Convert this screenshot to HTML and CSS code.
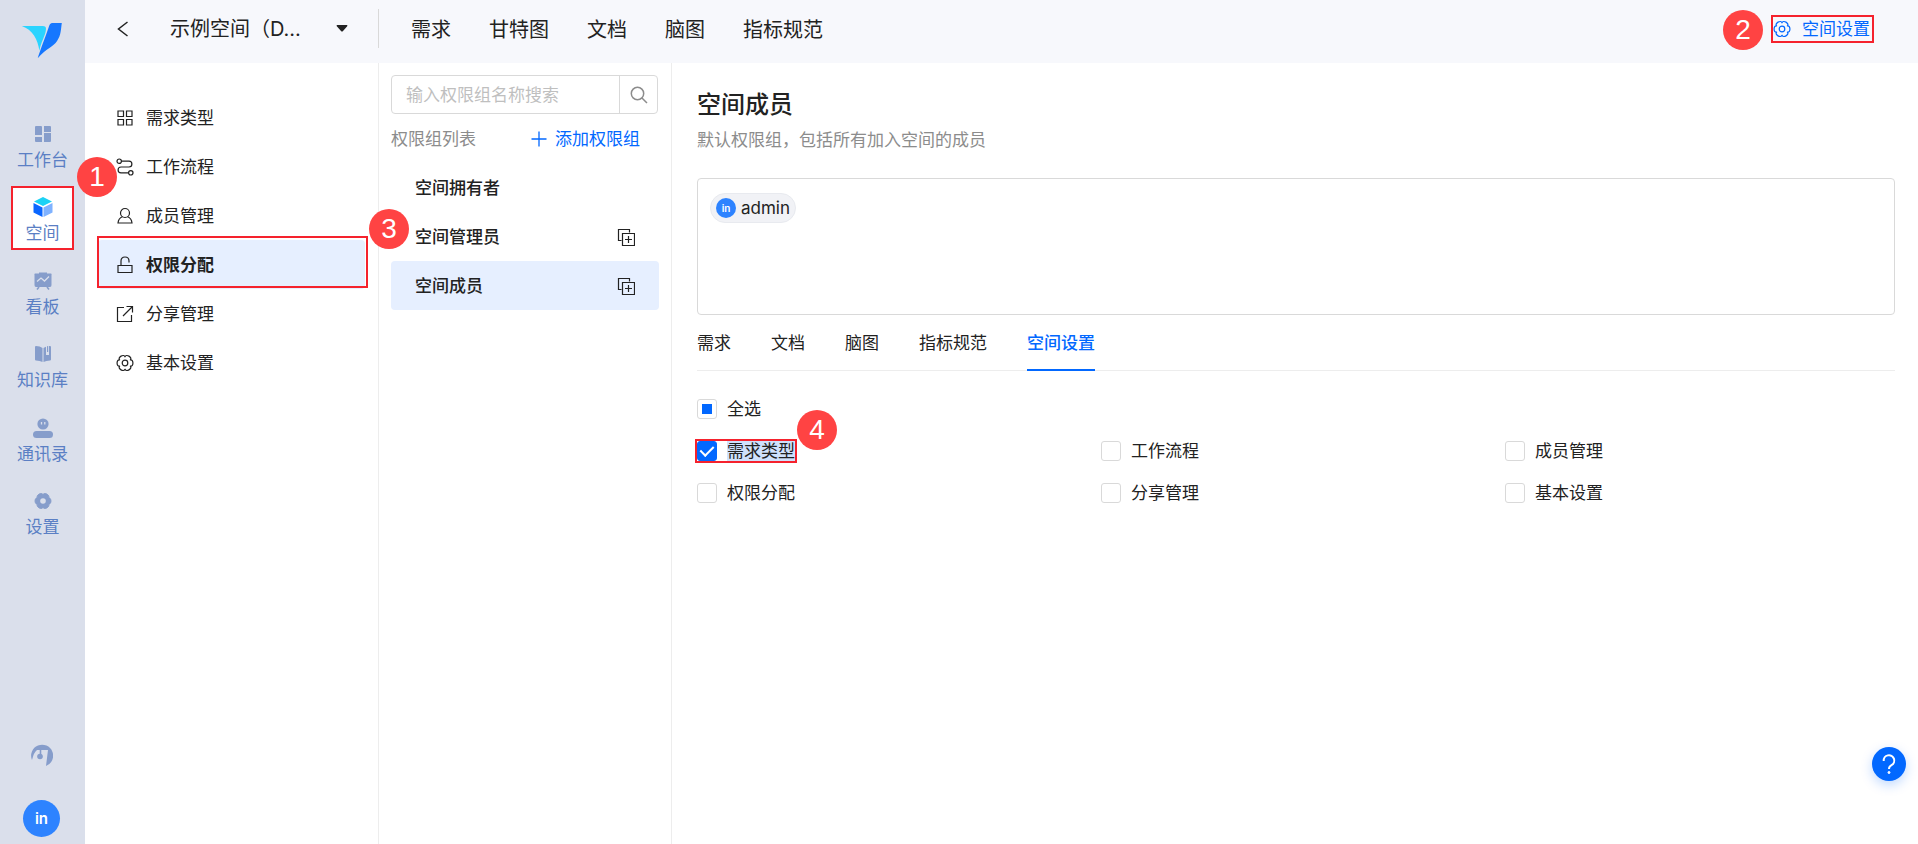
FILE: index.html
```html
<!DOCTYPE html>
<html lang="zh-CN">
<head>
<meta charset="utf-8">
<title>空间设置</title>
<link rel="stylesheet" href="styles.css">
</head>
<body>
<svg class="symbols" aria-hidden="true">
  <symbol id="gear" viewBox="0 0 18 18"><path stroke-linejoin="round" d="M14.37 5.9C17.77 5.1 17.77 12.9 14.37 12.1C16.77 14.64 10 18.55 9 15.2C8 18.55 1.23 14.64 3.63 12.1C.23 12.9 .23 5.1 3.63 5.9C1.23 3.36 8 -.55 9 2.8C10 -.55 16.77 3.36 14.37 5.9Z"/><circle cx="9" cy="9" r="2.800"/></symbol>
  <symbol id="copy" viewBox="0 0 18 18"><path d="M4.500 12.500H1.500V1.500H12.500V4.500M5.500 5.500H17.500V17.500H5.500ZM11.500 8V15M8 11.500H15"/></symbol>
</svg>
<div class="app">
  <aside class="rail">
    <svg class="logo" viewBox="60 60 126 115" aria-label="logo"><path fill="#2ad4ff" d="M62 75H125Q136 75 135 84C134 104 120 122 115 150C111 116 94 86 62 75Z"/><path fill="#1677ff" d="M153 66H183C180 84 181 102 169 120C157 139 135 143 110 173C118 147 133 110 143 80Q146 67 153 66Z"/></svg>
    <nav class="rail-nav">
      <a class="rail-item" href="#"><svg viewBox="0 0 20 20"><path d="M2 3Q2 2 3 2H8Q9 2 9 3V11H2ZM11 2H17Q18 2 18 3V8H11ZM2 13H9V18H3Q2 18 2 17ZM11 9H18V17Q18 18 17 18H11Z"/></svg><span>工作台</span></a>
      <a class="rail-item rail-item-active" href="#"><svg viewBox="0 0 20 20"><path fill="#1cd2f5" d="M10 0L19 4.500L10 9L1 4.500Z"/><path fill="#0a66ff" d="M.5 6L9.500 10.500V20L.5 15.500Z"/><path fill="#7fb2ff" d="M10.500 10.500L19.500 6V15.500L10.500 20Z"/></svg><span>空间</span><b class="badge badge-rail">1</b></a>
      <a class="rail-item" href="#"><svg viewBox="0 0 20 20"><path d="M2 2.500H6V1.500H14V2.500H18Q19 2.500 18.500 4V14Q18.500 16 17 16H3Q1.500 16 1.500 14V4Q1 2.500 2 2.500Z"/><path class="cut" d="M4 10.500L8 7L11.500 10L16 5.500"/><path class="leg" d="M6 16L4 18.500M14 16L16 18.500"/></svg><span>看板</span></a>
      <a class="rail-item" href="#"><svg viewBox="0 0 20 20"><path d="M2 3Q2 2 3 2Q7 2 9.500 4V18Q7 16.500 3 16.500Q2 16.500 2 15.500ZM10.500 4Q12 3 13 2.700V11H16V2H17Q18 2 18 3V15.500Q18 16.500 17 16.500Q13 16.500 10.500 18ZM14 2.300L15.200 2V8H14Z"/></svg><span>知识库</span></a>
      <a class="rail-item" href="#"><svg viewBox="0 0 20 20"><circle cx="10" cy="6" r="5.600"/><rect x="0" y="13" width="20" height="7" rx="3.500"/><path class="cut" d="M8.500 4V6.500M11.800 4V6.500"/></svg><span>通讯录</span></a>
      <a class="rail-item" href="#"><svg viewBox="0 0 20 20"><use href="#gear" x="1" y="1" width="18" height="18" class="solid-gear"/><circle class="hole" cx="10" cy="10" r="2.800"/></svg><span>设置</span></a>
    </nav>
    <div class="rail-foot">
      <button class="icon-button" aria-label="客服"><svg class="support" viewBox="0 0 22 22"><path d="M1 16A11 11 0 1 1 15 22L17 6H6Q3 8 1 16Z"/><path class="leg" d="M9.500 6V12"/><circle cx="9" cy="12.500" r="2.800"/></svg></button>
      <button class="avatar" aria-label="账户">in</button>
    </div>
  </aside>

  <div class="workspace">
    <header class="topbar">
      <div class="space-picker">
        <button class="icon-button back" aria-label="返回"><svg viewBox="0 0 12 16"><path d="M10.500 1L1.500 8L10.500 15"/></svg></button>
        <select class="space-select" aria-label="空间"><option>示例空间（D…</option></select>
        <svg class="caret" viewBox="0 0 12 7"><path d="M1 0H11Q12 .5 11 1.500L7 6Q6 7 5 6L1 1.500Q0 .5 1 0Z"/></svg>
      </div>
      <nav class="top-nav"><a href="#">需求</a><a href="#">甘特图</a><a href="#">文档</a><a href="#">脑图</a><a href="#">指标规范</a></nav>
      <a class="space-settings" href="#"><svg viewBox="0 0 18 18"><use href="#gear"/></svg>空间设置<b class="badge badge-top">2</b></a>
    </header>

    <div class="columns">
      <nav class="menu">
        <a class="menu-item" href="#"><svg viewBox="0 0 18 18"><path d="M2 2H7.500V7.500H2ZM10.500 2H16V7.500H10.500ZM2 10.500H7.500V16H2ZM10.500 10.500H16V16H10.500Z"/></svg>需求类型</a>
        <a class="menu-item" href="#"><svg viewBox="0 0 18 18"><circle cx="3.200" cy="3.200" r="2.200"/><circle cx="14.800" cy="14.800" r="2.200"/><path d="M5.500 3.200H13A2.900 2.900 0 0 1 13 9H5A2.900 2.900 0 0 0 5 14.800H12.500"/></svg>工作流程</a>
        <a class="menu-item" href="#"><svg viewBox="0 0 18 18"><circle cx="9" cy="6" r="4.500"/><path d="M6.500 9.700Q2.500 11 2 16H16Q15.500 11 11.500 9.700"/></svg>成员管理</a>
        <a class="menu-item menu-item-active" href="#"><svg viewBox="0 0 18 18"><path d="M2 9.500H16V16.500H2ZM5 9.500V5Q5 1 9 1T13 5V6.500"/></svg>权限分配</a>
        <a class="menu-item" href="#"><svg viewBox="0 0 18 18"><path d="M8 2.500H1.500V16.500H15.500V10M10.500 1.500H16.500V7.500M16.500 1.500L7 11"/></svg>分享管理</a>
        <a class="menu-item" href="#"><svg viewBox="0 0 18 18"><use href="#gear"/></svg>基本设置</a>
      </nav>

      <section class="groups">
        <b class="badge badge-groups">3</b>
        <div class="search">
          <input type="text" placeholder="输入权限组名称搜索" aria-label="搜索权限组">
          <button aria-label="搜索"><svg viewBox="0 0 18 18"><circle cx="7.500" cy="7.500" r="6.200"/><path d="M12 12L17 17"/></svg></button>
        </div>
        <div class="groups-head"><span>权限组列表</span><button class="add"><svg viewBox="0 0 16 16"><path d="M8 .5V15.500M.5 8H15.500"/></svg>添加权限组</button></div>
        <ul class="group-list">
          <li>空间拥有者</li>
          <li>空间管理员<button class="icon-button" aria-label="复制"><svg viewBox="0 0 18 18"><use href="#copy"/></svg></button></li>
          <li class="group-active">空间成员<button class="icon-button" aria-label="复制"><svg viewBox="0 0 18 18"><use href="#copy"/></svg></button></li>
        </ul>
      </section>

      <main class="detail">
        <h1>空间成员</h1>
        <p class="hint">默认权限组，包括所有加入空间的成员</p>
        <div class="members"><span class="member"><i class="mini-avatar">in</i>admin</span></div>
        <div class="tabs" role="tablist">
          <button role="tab">需求</button><button role="tab">文档</button><button role="tab">脑图</button><button role="tab">指标规范</button><button role="tab" class="tab-active" aria-selected="true">空间设置</button>
        </div>
        <div class="options">
          <label class="check check-all"><input type="checkbox" class="partial"><span>全选</span></label>
          <label class="check check-marked"><input type="checkbox" checked><span>需求类型</span><b class="badge badge-check">4</b></label>
          <label class="check"><input type="checkbox"><span>工作流程</span></label>
          <label class="check"><input type="checkbox"><span>成员管理</span></label>
          <label class="check"><input type="checkbox"><span>权限分配</span></label>
          <label class="check"><input type="checkbox"><span>分享管理</span></label>
          <label class="check"><input type="checkbox"><span>基本设置</span></label>
        </div>
      </main>
    </div>
  </div>
</div>
<button class="help" aria-label="帮助"><svg viewBox="0 0 34 34"><path d="M11.700 14A5.300 5.300 0 1 1 19.500 18.200Q17 19.500 17 22"/><circle cx="17" cy="25.500" r="1"/></svg></button>
</body>
</html>
```

FILE: styles.css
```css
* { box-sizing: border-box; }

:root {
  --blue: #0268ff;
  --red: #f5222d;
  --ink: #222;
  --muted: #8c8c8c;
  --line: #d9d9d9;
  --soft-line: #ededed;
  --tint: #e6efff;
}

body {
  margin: 0;
  color: var(--ink);
  background: #fff;
  font: 17px/24px Inter, "Noto Sans CJK SC", sans-serif;
}

a { color: inherit; text-decoration: none; }
button, input, select { font: inherit; color: inherit; }
button { padding: 0; border: 0; background: none; cursor: pointer; }
svg { display: block; flex: none; }
.symbols { position: absolute; width: 0; height: 0; }
.icon-button { display: flex; }

.app { display: flex; min-height: 100vh; }

.badge {
  position: absolute;
  z-index: 2;
  width: 40px;
  height: 40px;
  border-radius: 50%;
  background: #ff4343;
  color: #fff;
  font: 28px/40px "Liberation Sans", sans-serif;
  text-align: center;
}

/* left rail */
.rail {
  display: flex;
  flex-direction: column;
  align-items: center;
  flex: none;
  width: 85px;
  padding: 21px 2px 7px 0;
  background: #dadfeb;
}
.logo { width: 42px; height: 38px; margin-bottom: 49px; }
.rail-nav { display: grid; grid-auto-rows: 1fr; align-items: center; width: 100%; height: 441px; }
.rail-item {
  position: relative;
  display: flex;
  flex-direction: column;
  align-items: center;
  gap: 4px;
  height: 64px;
  margin: 0 9px 0 11px;
  padding-top: 11px;
  color: #5b7fc4;
}
.rail-item svg { width: 20px; height: 20px; fill: #869dcb; }
.rail-item span { white-space: nowrap; }
.rail-item-active { background: #fff; outline: 2px solid var(--red); outline-offset: -2px; }
.badge-rail { top: -29px; right: -43px; }
.cut { fill: none; stroke: #dadfeb; stroke-width: 1.3; }
.leg { fill: none; stroke: #869dcb; stroke-width: 1.6; }
.hole { fill: #dadfeb; }
.solid-gear { stroke: #869dcb; }
.rail-foot { display: flex; flex-direction: column; align-items: center; gap: 34px; margin-top: auto; }
.support { width: 22px; height: 22px; fill: #869dcb; }
.avatar { width: 37px; height: 37px; border-radius: 50%; background: #2d83ff; color: #fff; font-size: 15px; font-weight: 600; }

/* top bar */
.workspace { display: flex; flex-direction: column; flex: 1; min-width: 0; }
.topbar { display: flex; align-items: center; height: 63px; padding: 0 44px 6px 0; background: #f7f8fc; font-size: 20px; }
.space-picker { display: flex; align-items: center; width: 294px; height: 39px; padding: 0 30px 0 32px; border-right: 1px solid var(--line); }
.back svg { width: 12px; height: 16px; fill: none; stroke: var(--ink); stroke-width: 1.5; }
.space-select { appearance: none; flex: 1; min-width: 0; margin-left: 41px; padding: 0; border: 0; background: none; }
.caret { width: 12px; height: 7px; fill: var(--ink); }
.top-nav { display: flex; gap: 38px; margin-left: 32px; padding-top: 2px; }
.space-settings {
  position: relative;
  display: flex;
  align-items: center;
  gap: 11px;
  height: 28px;
  margin-left: auto;
  padding: 0 4px 0 2px;
  outline: 2px solid var(--red);
  outline-offset: -2px;
  color: var(--blue);
  font-size: 17px;
}
.space-settings svg { width: 18px; height: 18px; fill: none; stroke: var(--blue); stroke-width: 1.2; }
.badge-top { top: -5px; left: -48px; }

.columns { display: flex; flex: 1; }

/* settings menu */
.menu { flex: none; width: 294px; padding: 30px 13px 0 13px; border-right: 1px solid var(--soft-line); }
.menu-item { position: relative; display: flex; align-items: center; gap: 12px; height: 49px; padding-left: 18px; }
.menu-item svg { width: 18px; height: 18px; fill: none; stroke: var(--ink); stroke-width: 1.2; }
.menu-item-active { border-radius: 4px; background: var(--tint); font-weight: 700; }
.menu-item-active::after { content: ""; position: absolute; inset: -4px -3px 1px -1px; border: 2px solid var(--red); }

/* permission groups */
.groups { position: relative; flex: none; width: 293px; padding: 12px 12px 0; border-right: 1px solid var(--soft-line); }
.badge-groups { top: 146px; left: -10px; }
.search { display: flex; height: 39px; margin-right: 1px; border: 1px solid var(--line); border-radius: 4px; }
.search input { flex: 1; min-width: 0; padding: 0 14px; border: 0; background: none; outline: 0; }
.search input::placeholder { color: #bfbfbf; }
.search button { display: grid; place-items: center; width: 38px; border-left: 1px solid var(--line); }
.search svg { width: 18px; height: 18px; fill: none; stroke: var(--muted); stroke-width: 1.5; }
.groups-head { display: flex; justify-content: space-between; margin: 13px 19px 12px 0; color: var(--muted); }
.add { display: flex; align-items: center; gap: 8px; color: var(--blue); }
.add svg { width: 16px; height: 16px; stroke: var(--blue); stroke-width: 1.3; }
.group-list { margin: 0; padding: 0; list-style: none; font-weight: 500; }
.group-list li { display: flex; align-items: center; justify-content: space-between; height: 49px; padding: 0 24px 0 24px; border-radius: 4px; }
.group-list svg { width: 18px; height: 18px; fill: none; stroke: var(--ink); stroke-width: 1.2; }
.group-active { background: var(--tint); }

/* group detail */
.detail { flex: 1; min-width: 0; padding: 24px 23px 0 25px; }
h1 { margin: 0; font-size: 24px; line-height: 36px; font-weight: 500; }
.hint { margin: 5px 0 26px; color: var(--muted); }
.members { min-height: 137px; padding: 14px 12px; border: 1px solid var(--line); border-radius: 4px; }
.member { display: inline-flex; align-items: center; gap: 5px; height: 30px; padding: 0 5px; border: 1px solid #e8eaef; border-radius: 15px; background: #f1f2f6; }
.mini-avatar { width: 20px; height: 20px; border-radius: 50%; background: #2d83ff; color: #fff; font: 600 10px/20px Inter, sans-serif; text-align: center; }
.tabs { display: flex; gap: 40px; height: 56px; border-bottom: 1px solid var(--soft-line); }
.tabs button { padding-top: 2px; border-bottom: 2px solid transparent; margin-bottom: -1px; }
.tabs .tab-active { border-color: var(--blue); color: var(--blue); font-weight: 500; }
.options { display: grid; grid-template-columns: repeat(3, 1fr); gap: 22px 14px; padding-top: 28px; }
.check { position: relative; display: flex; align-items: center; justify-self: start; gap: 10px; height: 20px; line-height: 20px; }
.check-all { grid-column: 1 / -1; }
.check input { appearance: none; display: grid; place-items: center; width: 20px; height: 20px; margin: 0; border: 1px solid var(--line); border-radius: 3px; background: #fff; }
.check input:checked { border-color: var(--blue); background: var(--blue); }
.check input:checked::after { content: ""; width: 6px; height: 11px; margin-bottom: 3px; border: solid #fff; border-width: 0 2px 2px 0; transform: rotate(45deg); }
.partial::after { content: ""; width: 10px; height: 10px; background: var(--blue); }
.check-marked { outline: 2px solid var(--red); }
.check-marked span { background: #cfe1fc; }
.badge-check { top: -31px; right: -42px; }

.help { position: fixed; right: 12px; bottom: 63px; width: 34px; height: 34px; border-radius: 50%; background: var(--blue); box-shadow: 0 4px 12px #0268ff40; }
.help path { fill: none; stroke: #fff; stroke-width: 2; }
.help circle { fill: #fff; stroke: #fff; }
```
